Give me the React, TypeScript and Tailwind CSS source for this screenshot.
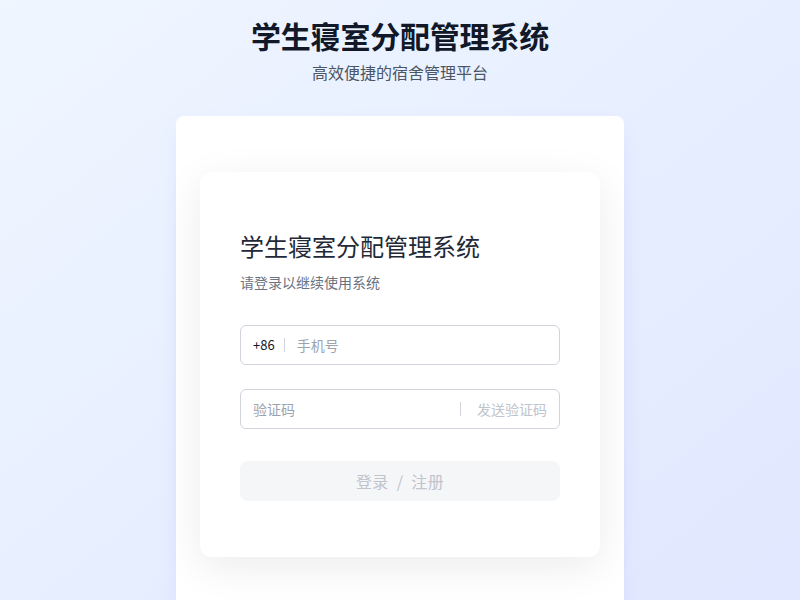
import React, { useState } from 'react';

const font = { fontFamily: '"Noto Sans CJK SC", "Noto Sans", sans-serif' };

const App: React.FC = () => {
  const [phone, setPhone] = useState('');
  const [code, setCode] = useState('');

  return (
    <div
      className="min-h-screen w-full bg-gradient-to-br from-[#eff6ff] to-[#e0e7ff] flex flex-col items-center pt-[16px] pb-10"
      style={font}
    >
      <h1 className="text-[30px] leading-[38px] font-bold text-[#111827] tracking-[-0.2px]">学生寝室分配管理系统</h1>
      <p className="mt-[8px] text-[16px] leading-[20px] text-[#4b5563]">高效便捷的宿舍管理平台</p>

      <div className="mt-[34px] w-[448px] bg-white rounded-lg shadow-[0_10px_25px_-5px_rgba(99,102,241,0.12)] px-6 py-14">
        <div className="bg-white rounded-xl shadow-[0_10px_40px_rgba(0,0,0,0.08)] px-10 pt-[58px] pb-[56px]">
          <h2 className="text-[24px] leading-[32px] text-[#1f2937]">学生寝室分配管理系统</h2>
          <p className="mt-[10px] text-[14px] leading-[20px] text-[#6b7280]">请登录以继续使用系统</p>

          <div className="mt-[33px] h-10 flex items-center border border-[#d1d5db] rounded-md px-3">
            <span className="text-[13px] text-[#111827]">+86</span>
            <span className="ml-[9px] mr-[12px] w-px h-[14px] bg-[#d1d5db]" />
            <input
              value={phone}
              onChange={(e) => setPhone(e.target.value)}
              placeholder="手机号"
              className="flex-1 bg-transparent outline-none text-[14px] text-[#111827] placeholder:text-[#9ca3af]"
            />
          </div>

          <div className="mt-6 h-10 flex items-center border border-[#d1d5db] rounded-md px-3">
            <input
              value={code}
              onChange={(e) => setCode(e.target.value)}
              placeholder="验证码"
              className="flex-1 min-w-0 bg-transparent outline-none text-[14px] text-[#111827] placeholder:text-[#9ca3af]"
            />
            <span className="w-px h-[14px] bg-[#d1d5db] mr-4" />
            <button className="text-[14px] text-[#c0c4cc]">发送验证码</button>
          </div>

          <button className="mt-8 w-full h-10 rounded-lg bg-[#f5f6f8] text-[16px] text-[#c0c4cc] tracking-wide">
            登录&nbsp;&nbsp;/&nbsp;&nbsp;注册
          </button>
        </div>
      </div>
    </div>
  );
};

export default App;
